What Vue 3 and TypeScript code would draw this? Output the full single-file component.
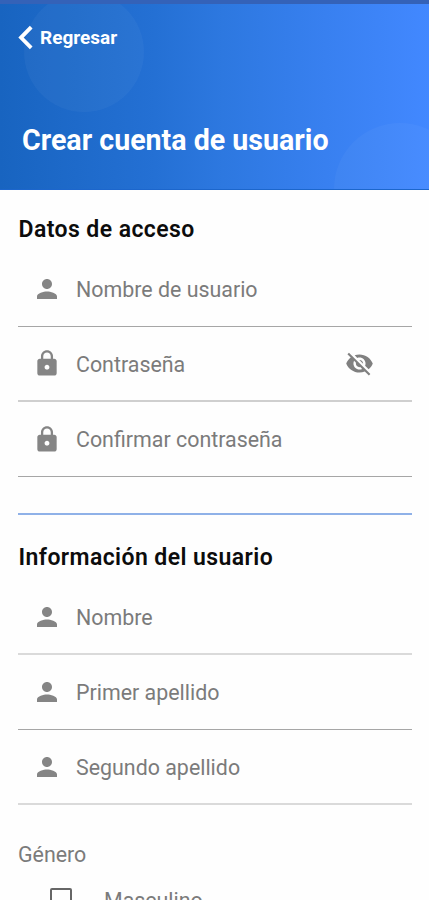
<script setup lang="ts">
type IconName = 'person' | 'lock'

interface Field {
  id: string
  label: string
  icon: IconName
  line: 'fine' | 'soft' | 'pale'
  secret?: boolean
}

const icons: Record<IconName, string> = {
  person:
    'M12 12c2.21 0 4-1.79 4-4s-1.79-4-4-4-4 1.79-4 4 1.79 4 4 4zm0 2c-2.67 0-8 1.34-8 4v2h16v-2c0-2.66-5.33-4-8-4z',
  lock:
    'M18 8h-1V6c0-2.76-2.24-5-5-5S7 3.24 7 6v2H6c-1.1 0-2 .9-2 2v10c0 1.1.9 2 2 2h12c1.1 0 2-.9 2-2V10c0-1.1-.9-2-2-2zm-6 9c-1.1 0-2-.9-2-2s.9-2 2-2 2 .9 2 2-.9 2-2 2zm3.1-9H8.9V6c0-1.71 1.39-3.1 3.1-3.1s3.1 1.39 3.1 3.1v2z',
}

const accessFields: Field[] = [
  { id: 'user', label: 'Nombre de usuario', icon: 'person', line: 'fine' },
  { id: 'pass', label: 'Contraseña', icon: 'lock', line: 'soft', secret: true },
  { id: 'confirm', label: 'Confirmar contraseña', icon: 'lock', line: 'fine' },
]

const userFields: Field[] = [
  { id: 'name', label: 'Nombre', icon: 'person', line: 'pale' },
  { id: 'last1', label: 'Primer apellido', icon: 'person', line: 'fine' },
  { id: 'last2', label: 'Segundo apellido', icon: 'person', line: 'pale' },
]

const sections = [
  { title: 'Datos de acceso', fields: accessFields },
  { title: 'Información del usuario', fields: userFields },
]
</script>

<template>
  <div class="screen">
    <div class="status-bar"></div>
    <header class="header">
      <span class="bubble bubble-left"></span>
      <span class="bubble bubble-right"></span>
      <a class="back">
        <svg class="chevron" viewBox="0 0 16 26"><path d="M13.2 2.2 3 12.6l10.2 10.2" /></svg>
        <span>Regresar</span>
      </a>
      <h1>Crear cuenta de usuario</h1>
    </header>

    <main class="form">
      <section v-for="(section, i) in sections" :key="section.title" :class="['section', { divided: i === 0 }]">
        <h2>{{ section.title }}</h2>
        <div v-for="f in section.fields" :key="f.id" :class="['field', f.line]">
          <svg :class="['icon', f.icon]" viewBox="0 0 24 24"><path :d="icons[f.icon]" /></svg>
          <span class="label">{{ f.label }}</span>
          <svg v-if="f.secret" class="eye" viewBox="0 0 24 24">
            <path d="M12 7c2.76 0 5 2.24 5 5 0 .65-.13 1.26-.36 1.83l2.92 2.92c1.51-1.26 2.7-2.89 3.43-4.75-1.73-4.39-6-7.5-11-7.5-1.4 0-2.74.25-3.98.7l2.16 2.16C10.74 7.13 11.35 7 12 7zM2 4.27l2.28 2.28.46.46C3.08 8.3 1.78 10.02 1 12c1.73 4.39 6 7.5 11 7.5 1.55 0 3.03-.3 4.38-.84l.42.42L19.73 22 21 20.73 3.27 3 2 4.27zM7.53 9.8l1.55 1.55c-.05.21-.08.43-.08.65 0 1.66 1.34 3 3 3 .22 0 .44-.03.65-.08l1.55 1.55c-.67.33-1.41.53-2.2.53-2.76 0-5-2.24-5-5 0-.79.2-1.53.53-2.2zm4.31-.78l3.15 3.15.02-.16c0-1.66-1.34-3-3-3l-.17.01z" />
          </svg>
        </div>
      </section>

      <section class="gender">
        <p class="gender-title">Género</p>
        <div class="option">
          <span class="checkbox"></span>
          <span class="option-label">Masculino</span>
        </div>
      </section>
    </main>
  </div>
</template>

<style>
body {
  background: #fefefe;
  overflow: hidden;
}
</style>

<style scoped>
.screen {
  height: 900px;
  overflow: hidden;
  background: #fefefe;
  font-family: Roboto, 'Liberation Sans', sans-serif;
}
.status-bar {
  height: 4px;
  background: #3462b8;
}
.header {
  position: relative;
  box-sizing: border-box;
  height: 186px;
  padding: 20px 18px 0;
  overflow: hidden;
  color: #fff;
  background: linear-gradient(90deg, #1864c0 0%, #2470d4 36%, #2d78e0 52%, #3880f0 76%, #4288ff 100%);
  border-bottom: 1px solid #1c66cc;
}
.bubble {
  position: absolute;
  border-radius: 50%;
  background: rgba(255, 255, 255, 0.035);
}
.bubble-left {
  left: 24px;
  top: -12px;
  width: 120px;
  height: 120px;
}
.bubble-right {
  left: 334px;
  top: 119px;
  width: 132px;
  height: 132px;
}
.back {
  position: relative;
  display: flex;
  align-items: center;
  gap: 6px;
  height: 27px;
  font-size: 19px;
  font-weight: 700;
}
.chevron {
  width: 16px;
  height: 26px;
  fill: none;
  stroke: #fff;
  stroke-width: 3.8;
}
h1 {
  position: relative;
  margin: 72px 0 0 4px;
  font-size: 28.6px;
  line-height: 34px;
  font-weight: 700;
  white-space: nowrap;
}
.form {
  padding: 0 17px 0 18px;
}
.section {
  padding-top: 24px;
}
.divided {
  height: 299px;
  border-bottom: 2px solid #8fb1e8;
}
.section + .section {
  padding-top: 27px;
}
h2 {
  margin: 0;
  height: 38.6px;
  padding-left: 0.5px;
  font-size: 23px;
  line-height: 32px;
  font-weight: 600;
  letter-spacing: 0.42px;
  color: #0c0c0c;
  white-space: nowrap;
}
.field {
  display: flex;
  align-items: center;
  box-sizing: border-box;
  height: 74.8px;
  padding: 0 38px 0 14px;
  border-bottom: 2px solid #bdbdbd;
}
.field.fine {
  border-bottom: 1px solid #a6a6a6;
}
.field.soft {
  border-bottom-color: #cfcfcf;
}
.field.pale {
  border-bottom-color: #dadada;
}
.icon {
  width: 30px;
  height: 30px;
  margin-right: 14px;
  fill: #858585;
}
.icon.lock {
  height: 29px;
}
.label {
  flex: 1;
  padding-top: 1px;
  font-size: 21.4px;
  color: #7b7b7b;
  white-space: nowrap;
}
.eye {
  width: 29px;
  height: 29px;
  fill: #808080;
}
.gender-title {
  margin: 35.4px 0 0;
  font-size: 21.4px;
  line-height: 30px;
  color: #7b7b7b;
}
.option {
  display: flex;
  align-items: flex-start;
  margin-top: 18px;
  padding-left: 32px;
}
.checkbox {
  box-sizing: border-box;
  width: 22px;
  height: 22px;
  border: 2px solid #666;
  border-radius: 2px;
}
.option-label {
  margin-left: 32px;
  font-size: 21.4px;
  line-height: 25px;
  color: #7b7b7b;
}
</style>
